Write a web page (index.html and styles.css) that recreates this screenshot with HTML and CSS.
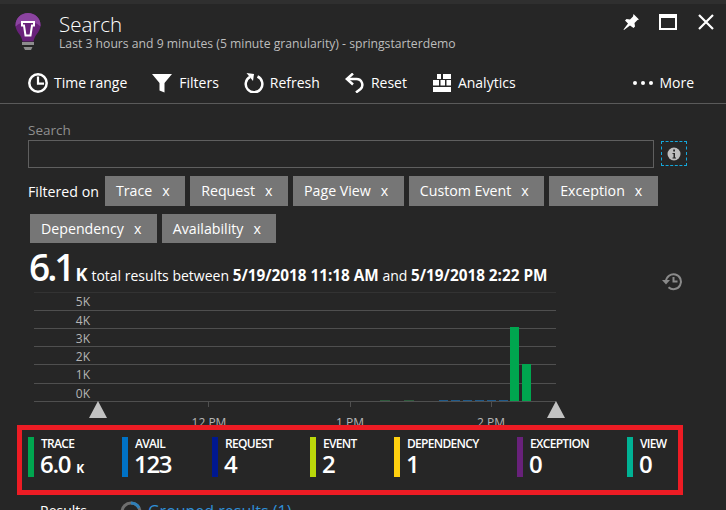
FILE: index.html
```html
<!DOCTYPE html>
<html lang="en">
<head>
    <meta charset="UTF-8">
    <title>Search</title>
    <link rel="stylesheet" href="styles.css">
</head>
<body>
    <div class="topstrip"></div>
    <header class="header">
        <svg class="bulb" width="26" height="38" viewBox="0 0 26 38">
            <path d="M13 0C6 0 .500 5 .500 12c0 4 2 7 4 9.500 1.500 2 2.500 4 3 7h11c.500-3 1.500-5 3-7 2-2.500 4-5.500 4-9.500C25.500 5 20 0 13 0z" fill="#68217a"/>
            <path d="M13 0C6 0 .500 5 .500 12c0 .5 0 1 .1 1.500C4 10 8 9 13 9s9 1 12.400 4.500c.1-.5.1-1 .1-1.500C25.500 5 20 0 13 0z" fill="#8b44a0"/>
            <path d="M7 9h12v3.500h-2l-1.500 10h-5L9 12.500H7z" fill="none" stroke="#fff" stroke-width="2"/>
            <path d="M7 29h12v3H7zM8.500 34h9l-1.500 3h-6z" fill="#8c8c8c"/>
        </svg>
        <div class="heading">
            <h1>Search</h1>
            <p>Last 3 hours and 9 minutes (5 minute granularity) - springstarterdemo</p>
        </div>
        <div class="window-btns">
            <svg width="18" height="18" viewBox="0 0 18 18"><path d="M11.500 1l5.500 5.500-1.500.5-3 3 .5 3.500-1.500 1.500L8 12.500l-6 4.500-.5-.5L6 10.500 3 7.500 4.500 6l3.500.5 3-3z" fill="#fff"/></svg>
            <svg width="18" height="16" viewBox="0 0 18 16"><path d="M1 1h16v14H1z" fill="none" stroke="#fff" stroke-width="2"/><path d="M1 1h16v3H1z" fill="#fff"/></svg>
            <svg width="16" height="16" viewBox="0 0 16 16"><path d="M1 1l14 14M15 1L1 15" stroke="#fff" stroke-width="2.200"/></svg>
        </div>
    </header>

    <nav class="toolbar">
        <a class="tool tool-time">
            <svg width="20" height="20" viewBox="0 0 20 20"><circle cx="10" cy="10" r="8.700" fill="none" stroke="#fff" stroke-width="2.500"/><path d="M10 3.500v7.200h6" fill="none" stroke="#fff" stroke-width="2.200"/></svg>
            Time range
        </a>
        <a class="tool tool-filter">
            <svg width="20" height="20" viewBox="0 0 20 20"><path d="M0 1h20l-7.500 9v9.500l-5-2V10z" fill="#fff"/></svg>
            Filters
        </a>
        <a class="tool tool-refresh">
            <svg width="20" height="21" viewBox="0 0 20 21"><path d="M13.500 4.500a8.300 8.300 0 1 1-7.500.3" fill="none" stroke="#fff" stroke-width="2.500"/><path d="M2.500 1l7.500 1-1 7z" fill="#fff"/></svg>
            Refresh
        </a>
        <a class="tool tool-reset">
            <svg width="19" height="20" viewBox="0 0 19 20"><path d="M2 6h9.500a5.800 5.800 0 0 1 4 10L11 19.500" fill="none" stroke="#fff" stroke-width="2.500"/><path d="M8 .5L1.800 6 8 11.500" fill="none" stroke="#fff" stroke-width="2.500"/></svg>
            Reset
        </a>
        <a class="tool tool-analytics">
            <svg width="18" height="18" viewBox="0 0 18 18"><path d="M4 0h4v5H4zM10 0h8v5h-8zM0 6h6v5.500H0zM7.500 6H12v5.500H7.500zM13.500 6H18v5.500h-4.500zM0 13h18v5H0z" fill="#fff"/></svg>
            Analytics
        </a>
        <a class="tool tool-more">
            <span class="dots"><i></i><i></i><i></i></span>
            More
        </a>
    </nav>

    <main class="content">
        <label class="search-label">Search</label>
        <div class="search-row">
            <div class="search-input"></div>
            <div class="info-btn">
                <svg width="14" height="14" viewBox="0 0 14 14"><circle cx="7" cy="7" r="6.500" fill="#bdbdbd"/><path d="M5.500 6h2.500v4.500h1v1H5.500v-1h1V7h-1zM6.200 2.500h1.800v2H6.200z" fill="#262626"/></svg>
            </div>
        </div>

        <div class="filters">
            <span class="filters-label">Filtered on</span>
            <span class="tag">Trace<b>x</b></span>
            <span class="tag">Request<b>x</b></span>
            <span class="tag">Page View<b>x</b></span>
            <span class="tag">Custom Event<b>x</b></span>
            <span class="tag">Exception<b>x</b></span>
        </div>
        <div class="filters filters-second">
            <span class="tag">Dependency<b>x</b></span>
            <span class="tag">Availability<b>x</b></span>
        </div>

        <div class="total">
            <span class="total-num">6.1</span>
            <span class="total-unit">K</span>
            <span class="total-text">total results between <b>5/19/2018 11:18 AM</b> and <b>5/19/2018 2:22 PM</b></span>
            <svg class="history" width="21" height="19" viewBox="0 0 21 19"><path d="M4 9.500a7.500 7.500 0 1 1 2.500 5.800" fill="none" stroke="#8a8a8a" stroke-width="2"/><path d="M0 8h8l-4 4.500z" fill="#8a8a8a"/><path d="M11.500 5v4.500h4" fill="none" stroke="#8a8a8a" stroke-width="2"/></svg>
        </div>
    </main>

    <svg class="chart" width="726" height="140" viewBox="0 290 726 140">
        <g stroke="#4f4f4f" stroke-width="1">
            <path d="M34 292.500H556" stroke="#333"/>
            <path d="M34 310.500H556M34 328.500H556M34 346.500H556M34 364.500H556M34 383.500H556M34 401.500H556"/>
            <path d="M208.500 402v5M350.500 402v5M491.500 402v5"/>
        </g>
        <g class="ylabels" text-anchor="end">
            <text x="90" y="306">5K</text>
            <text x="90" y="325">4K</text>
            <text x="90" y="343">3K</text>
            <text x="90" y="361">2K</text>
            <text x="90" y="379">1K</text>
            <text x="90" y="398">0K</text>
        </g>
        <path d="M380 400.500h10M404 400.500h10" stroke="#2d5a3c"/>
        <path d="M439 400.500h69" stroke="#1f5a8a" stroke-dasharray="9 3"/>
        <rect x="510" y="327" width="9" height="74" fill="#00a64f"/>
        <rect x="522" y="364" width="9" height="37" fill="#00a64f"/>
        <path d="M98 401l9 17H89zM556 401l9 17H547z" fill="#c2c2c2"/>
        <g class="xlabels" text-anchor="middle">
            <text x="209" y="427">12 PM</text>
            <text x="350" y="427">1 PM</text>
            <text x="491" y="427">2 PM</text>
        </g>
    </svg>

    <section class="stats">
        <div class="stat stat-trace"><div class="stat-label">TRACE</div><div class="stat-value">6.0<small>K</small></div></div>
        <div class="stat stat-avail"><div class="stat-label">AVAIL</div><div class="stat-value">123</div></div>
        <div class="stat stat-request"><div class="stat-label">REQUEST</div><div class="stat-value">4</div></div>
        <div class="stat stat-event"><div class="stat-label">EVENT</div><div class="stat-value">2</div></div>
        <div class="stat stat-dependency"><div class="stat-label">DEPENDENCY</div><div class="stat-value">1</div></div>
        <div class="stat stat-exception"><div class="stat-label">EXCEPTION</div><div class="stat-value">0</div></div>
        <div class="stat stat-view"><div class="stat-label">VIEW</div><div class="stat-value">0</div></div>
    </section>

    <div class="results">
        <span class="results-title">Results</span>
        <svg width="22" height="22" viewBox="0 0 22 22"><circle cx="11" cy="11" r="9" fill="none" stroke="#6e6e6e" stroke-width="3"/><path d="M11 2a9 9 0 0 1 8 5" fill="none" stroke="#2f7fb8" stroke-width="3"/></svg>
        <a class="results-link">Grouped results (1)</a>
    </div>
</body>
</html>
```

FILE: styles.css
```css
html, body {
    height: 510px;
    overflow: hidden;
}
body {
    margin: 0;
    font-family: "Open Sans", "Liberation Sans", sans-serif;
    color: #fff;
    background-color: #262626;
}
.topstrip {
    height: 4px;
    background-color: #2f2f2f;
}

/* header */
.header {
    display: flex;
    height: 49px;
    padding: 9px 0 0 15px;
    box-sizing: border-box;
}
.bulb {
    flex: none;
}
.heading {
    margin: -1px 0 0 18px;
    flex: 1;
}
.heading h1 {
    margin: 0;
    font-size: 20.500px;
    font-weight: 300;
    line-height: 24px;
}
.heading p {
    margin: 0;
    font-size: 12.200px;
    line-height: 16px;
    color: #bdbdbd;
}
.window-btns {
    display: flex;
    align-items: center;
    height: 18px;
    padding-right: 12px;
}
.window-btns svg:nth-child(2) {
    margin: 0 21px 0 19px;
}

/* toolbar */
.toolbar {
    display: flex;
    align-items: center;
    height: 51px;
    box-sizing: border-box;
    border-bottom: 1px solid #5a5a5a;
    padding: 9px 0 0 28px;
    font-size: 14px;
}
.tool {
    display: flex;
    align-items: center;
    gap: 6px;
}
.tool-filter { margin-left: 25px; gap: 7px; }
.tool-refresh { margin-left: 25px; }
.tool-reset { margin-left: 25px; gap: 7px; }
.tool-analytics { margin-left: 26px; gap: 7px; }
.tool-more { margin-left: auto; margin-right: 32px; }
.dots {
    display: flex;
    gap: 4px;
}
.dots i {
    width: 4px;
    height: 4px;
    border-radius: 50%;
    background-color: #fff;
}

/* search */
.content {
    padding: 0 28px;
    height: 190px;
}
.search-label {
    display: block;
    margin-top: 18px;
    font-size: 13.500px;
    line-height: 17px;
    color: #8f8f8f;
}
.search-row {
    display: flex;
    margin-top: 1px;
}
.search-input {
    width: 626px;
    height: 28px;
    box-sizing: border-box;
    border: 1px solid #5f5f5f;
}
.info-btn {
    display: flex;
    align-items: center;
    justify-content: center;
    width: 26px;
    height: 25px;
    margin: 1px 0 0 7px;
    box-sizing: border-box;
    border: 1px dashed #14a8dc;
}

.filters {
    display: flex;
    align-items: center;
    gap: 5px;
    margin-top: 8px;
    font-size: 14.200px;
}
.filters-label {
    width: 72px;
}
.filters-second {
    margin: 8px 0 0 2px;
}
.tag {
    height: 30px;
    line-height: 29px;
    padding: 0 15.500px 0 11px;
    background-color: #767676;
}
.filters-second .tag {
    height: 29px;
}
.tag b {
    font-weight: 400;
    margin-left: 10px;
}

.total {
    display: flex;
    align-items: baseline;
    margin: 0 0 0 1px;
    font-size: 14px;
}
.total-num {
    font-size: 37px;
    font-weight: 600;
    line-height: 48px;
    letter-spacing: -3px;
}
.total-unit {
    margin-left: 3px;
    font-size: 18px;
    font-weight: 700;
}
.total-text {
    margin-left: 4px;
}
.total-text b {
    font-size: 15.300px;
    font-weight: 700;
}
.history {
    position: absolute;
    left: 662px;
    top: 272px;
}

/* chart */
.chart {
    display: block;
    margin-top: -22px;
}
.chart text {
    font-size: 12px;
    fill: #b5b5b5;
}

/* stats */
.stats {
    position: relative;
    display: grid;
    grid-template-columns: 94px 90px 98px 84px 123px 110px 1fr;
    margin: -5px 0 0 17px;
    width: 666px;
    height: 70px;
    box-sizing: border-box;
    border: 5px solid #ed1c24;
    padding: 7px 0 0 6px;
    background-color: #262626;
}
.stat {
    height: 40px;
    border-left: 6px solid #888;
    padding-left: 7px;
}
.stat-label {
    font-size: 12px;
    font-weight: 600;
    line-height: 13px;
    letter-spacing: -.7px;
}
.stat-value {
    margin-left: -1px;
    font-size: 24px;
    font-weight: 600;
    line-height: 28px;
    letter-spacing: -1.300px;
}
.stat-value small {
    margin-left: 6px;
    font-size: 12px;
    font-weight: 700;
}
.stat-trace { border-color: #00a64f; }
.stat-avail { border-color: #0072c6; }
.stat-request { border-color: #00188f; }
.stat-event { border-color: #bad80a; }
.stat-dependency { border-color: #ffd00f; }
.stat-exception { border-color: #68217a; }
.stat-view { border-color: #00b294; }

/* results */
.results {
    display: flex;
    align-items: flex-start;
    margin: 6px 0 0 40px;
    font-size: 14px;
    line-height: 20px;
}
.results svg {
    margin: 0 6px 0 33px;
}
.results-link {
    font-size: 16px;
    color: #2f8fd8;
}
```
